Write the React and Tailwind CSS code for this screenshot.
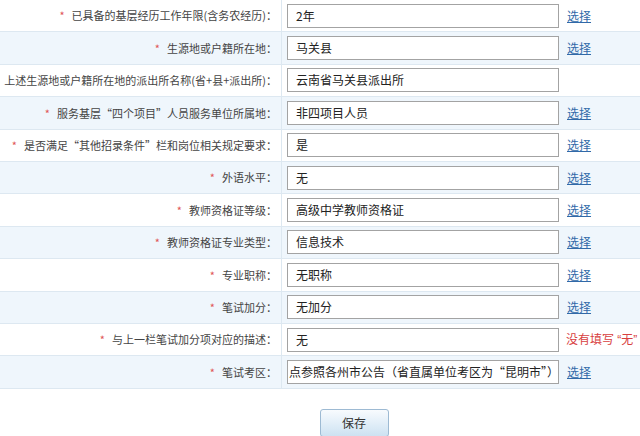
import React from "react";

const rows = [
  { label: "已具备的基层经历工作年限(含务农经历)", value: "2年", star: true, link: true },
  { label: "生源地或户籍所在地", value: "马关县", star: true, link: true },
  { label: "上述生源地或户籍所在地的派出所名称(省+县+派出所)", value: "云南省马关县派出所", star: false, link: false },
  { label: "服务基层“四个项目”人员服务单位所属地", value: "非四项目人员", star: true, link: true },
  { label: "是否满足“其他招录条件”栏和岗位相关规定要求", value: "是", star: true, link: true },
  { label: "外语水平", value: "无", star: true, link: true },
  { label: "教师资格证等级", value: "高级中学教师资格证", star: true, link: true },
  { label: "教师资格证专业类型", value: "信息技术", star: true, link: true },
  { label: "专业职称", value: "无职称", star: true, link: true },
  { label: "笔试加分", value: "无加分", star: true, link: true },
  { label: "与上一栏笔试加分项对应的描述", value: "无", star: true, warn: "没有填写 “无”" },
  { label: "笔试考区", value: "点参照各州市公告（省直属单位考区为“昆明市”）", star: true, link: true },
];

const App = () => {
  return (
    <div
      className="w-[640px] h-[436px] overflow-hidden bg-white text-[#333]"
      style={{ fontFamily: '"Noto Sans CJK SC", "Liberation Sans", sans-serif' }}
    >
      <div className="flex flex-col">
        {rows.map((row, i) => (
          <div
            key={i}
            className={`flex h-[32.4px] items-center border-b border-[#dde8f1] ${
              i % 2 === 1 ? "bg-[#eff6fc]" : "bg-white"
            }`}
          >
            <div className="w-[282px] h-full shrink-0 flex items-center justify-end pr-[4px] border-r border-[#dde8f1] whitespace-nowrap overflow-hidden text-[11px] text-[#444]">
              {row.star && <span className="text-[#e05555] mr-[7px] ml-[2px]">*</span>}
              <span>{row.label}：</span>
            </div>
            <div className="ml-[5px] w-[272px] h-[24px] shrink-0 border border-[#a3a3a3] bg-white flex items-center px-[8px] overflow-hidden whitespace-nowrap text-[12px] text-[#222]">
              {i === 11 ? <span className="-ml-[7px]">{row.value}</span> : row.value}
            </div>
            {row.link && (
              <a className="ml-[8px] text-[12px] text-[#3169a8] underline cursor-pointer">选择</a>
            )}
            {row.warn && (
              <span className="ml-[7px] text-[12px] text-[#d84040] whitespace-nowrap font-['Liberation_Sans','Noto_Sans_CJK_SC',sans-serif]">
                {row.warn}
              </span>
            )}
          </div>
        ))}
      </div>
      <div className="flex justify-center pt-[20px]">
        <button className="w-[69px] h-[28px] ml-[68px] rounded-[3px] border border-[#9dbad3] bg-gradient-to-b from-[#f8fbfe] to-[#cde2f2] text-[12px] text-[#333]">
          保存
        </button>
      </div>
    </div>
  );
};

export default App;
